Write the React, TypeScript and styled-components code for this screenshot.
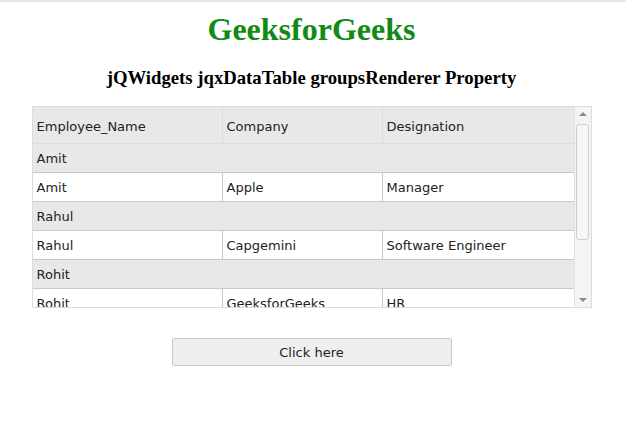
import React from "react";
import styled, { createGlobalStyle } from "styled-components";

const Global = createGlobalStyle`
  html, body { margin: 0; padding: 0; background: #fff; }
  body { font-family: "Liberation Serif", "Times New Roman", serif; }
`;

const Page = styled.div`
  width: 626px;
  height: 442px;
  box-sizing: border-box;
  padding-right: 3px;
  border-top: 2px solid #e6e6e6;
  display: flex;
  flex-direction: column;
  align-items: center;
  overflow: hidden;
`;

const Title = styled.h1`
  margin: 9px 0 0;
  font-size: 32px;
  line-height: 37px;
  font-weight: bold;
  color: #138a13;
  font-family: "Liberation Serif", "Times New Roman", serif;
`;

const Subtitle = styled.h3`
  margin: 19px 0 0;
  font-size: 18.72px;
  line-height: 22px;
  font-weight: bold;
  color: #000;
  font-family: "Liberation Serif", "Times New Roman", serif;
`;

const Table = styled.div`
  margin-top: 17px;
  width: 560px;
  height: 202px;
  box-sizing: border-box;
  border: 1px solid #dcdcdc;
  display: flex;
  font-family: "DejaVu Sans", Verdana, sans-serif;
  font-size: 13px;
  color: #222;
`;

const Body = styled.div`
  flex: 1;
  display: flex;
  flex-direction: column;
  overflow: hidden;
`;

const Row = styled.div<{ $kind: "head" | "group" | "data" }>`
  display: flex;
  flex-shrink: 0;
  height: ${(p) => (p.$kind === "head" ? 37 : 29)}px;
  box-sizing: border-box;
  padding-top: ${(p) => (p.$kind === "head" ? 2 : 0)}px;
  background: ${(p) => (p.$kind === "data" ? "#ffffff" : "#e8e8e8")};
  border-bottom: 1px solid
    ${(p) => (p.$kind === "head" ? "#dedede" : "#c9c9c9")};
`;

const Cell = styled.div<{ $w: number; $last?: boolean; $head?: boolean }>`
  width: ${(p) => p.$w}px;
  flex-shrink: 0;
  box-sizing: border-box;
  padding-left: 4px;
  display: flex;
  align-items: center;
  border-right: ${(p) =>
    p.$last ? "none" : `1px solid ${p.$head ? "#dadada" : "#c9c9c9"}`};
  white-space: nowrap;
  overflow: hidden;
`;

const GroupCell = styled.div`
  flex: 1;
  padding-left: 4px;
  display: flex;
  align-items: center;
`;

const ScrollBar = styled.div`
  width: 17px;
  flex-shrink: 0;
  background: #f4f4f4;
  border-left: 1px solid #e4e4e4;
  display: flex;
  flex-direction: column;
  align-items: center;
  box-sizing: border-box;
`;

const Arrow = styled.div<{ $dir: "up" | "down" }>`
  width: 0;
  height: 0;
  border-left: 4px solid transparent;
  border-right: 4px solid transparent;
  ${(p) =>
    p.$dir === "up"
      ? "border-bottom: 4px solid #8a8a8a;"
      : "border-top: 4px solid #8a8a8a;"}
  margin: 5px 0;
`;

const Track = styled.div`
  flex: 1;
  width: 100%;
  display: flex;
  flex-direction: column;
  align-items: center;
`;

const Thumb = styled.div`
  width: 13px;
  height: 116px;
  box-sizing: border-box;
  border: 1px solid #cfcfcf;
  border-radius: 3px;
  background: #f6f6f6;
  margin-top: 3px;
`;

const Spacer = styled.div`
  flex: 1;
`;

const Button = styled.button`
  margin-top: 30px;
  width: 280px;
  height: 28px;
  box-sizing: border-box;
  background: #efefef;
  border: 1px solid #c8c8c8;
  border-radius: 2px;
  font-family: "DejaVu Sans", Verdana, sans-serif;
  font-size: 13px;
  color: #222;
  padding: 0;
`;

const widths = [190, 160, 191];
const data = [
  ["Amit", "Apple", "Manager"],
  ["Rahul", "Capgemini", "Software Engineer"],
  ["Rohit", "GeeksforGeeks", "HR"],
];

export default function App() {
  return (
    <>
      <Global />
      <Page>
        <Title>GeeksforGeeks</Title>
        <Subtitle>jQWidgets jqxDataTable groupsRenderer Property</Subtitle>
        <Table>
          <Body>
            <Row $kind="head">
              {["Employee_Name", "Company", "Designation"].map((h, i) => (
                <Cell key={h} $w={widths[i]} $last={i === 2} $head>
                  {h}
                </Cell>
              ))}
            </Row>
            {data.map((r) => (
              <React.Fragment key={r[0]}>
                <Row $kind="group">
                  <GroupCell>{r[0]}</GroupCell>
                </Row>
                <Row $kind="data">
                  {r.map((c, i) => (
                    <Cell key={i} $w={widths[i]} $last={i === 2}>
                      {c}
                    </Cell>
                  ))}
                </Row>
              </React.Fragment>
            ))}
          </Body>
          <ScrollBar>
            <Arrow $dir="up" />
            <Track>
              <Thumb />
              <Spacer />
            </Track>
            <Arrow $dir="down" />
          </ScrollBar>
        </Table>
        <Button>Click here</Button>
      </Page>
    </>
  );
}
